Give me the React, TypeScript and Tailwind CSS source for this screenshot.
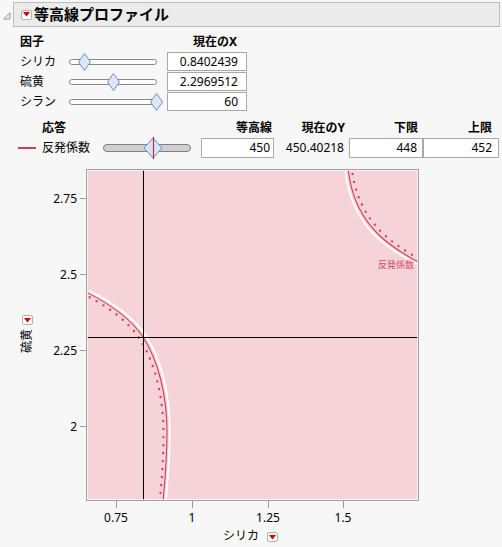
import React from "react";

const MenuButton = () => (
  <span className="inline-flex w-[11px] h-[10px] shrink-0 items-center justify-center rounded-[2px] border border-[#b3b3b3] bg-white">
    <svg width="7" height="5" viewBox="0 0 7 5">
      <path d="M0 0H7L3.5 4.5Z" fill="#d40000" />
    </svg>
  </span>
);

const FactorSlider = ({ pos }: { pos: number }) => (
  <div className="relative flex h-[19px] w-[88px] items-center">
    <div className="h-[6px] w-full rounded-full border border-[#8a8a8a] bg-white" />
    <svg
      className="absolute top-[1px]"
      style={{ left: pos - 6.5 }}
      width="13"
      height="18"
      viewBox="0 0 13 18"
    >
      <path d="M6.5 0.5L12.5 9L6.5 17.5L0.5 9Z" fill="#dce8f7" stroke="#6c90c6" />
    </svg>
  </div>
);

const factors = [
  { name: "シリカ", value: "0.8402439", pos: 15 },
  { name: "硫黄", value: "2.2969512", pos: 44 },
  { name: "シラン", value: "60", pos: 87 },
];

const Box = ({ children, w, pr }: { children: React.ReactNode; w: string; pr: string }) => (
  <div className={`flex h-[20px] items-center justify-end border border-[#a9a9a9] bg-white ${w} ${pr}`}>
    {children}
  </div>
);

export default function App() {
  const yTicks = [
    { label: "2.75", y: 198 },
    { label: "2.5", y: 274 },
    { label: "2.25", y: 350 },
    { label: "2", y: 426 },
  ];
  const xTicks = [
    { label: "0.75", x: 116 },
    { label: "1", x: 192 },
    { label: "1.25", x: 268 },
    { label: "1.5", x: 343 },
  ];
  const leftCurve =
    "M86,292 C110,304 131,319 143,337 C158,360 167,395 167,432 C167,460 165,480 163,502";
  const rightCurve =
    "M348,168 C351,198 363,220 380,236 C393,248 405,255 420,263";

  return (
    <div className="h-[547px] w-[502px] overflow-hidden bg-[#f7f7f7] font-['Noto_Sans','Noto_Sans_CJK_JP',sans-serif] text-[12px] leading-none text-black">
      {/* header */}
      <div className="flex h-[29px] items-center pl-[3px]">
        <svg width="8" height="8" viewBox="0 0 8 8" className="mt-[3px]">
          <path d="M7 0.8L7 7L0.8 7Z" fill="#eeeeee" stroke="#8c8c8c" strokeWidth="0.9" />
        </svg>
        <div className="ml-[2px] flex h-[25px] w-[487px] items-center gap-[2px] border border-[#bdbdbd] bg-[#ebebeb] pl-[7px]">
          <MenuButton />
          <span className="text-[15px] font-bold">等高線プロファイル</span>
        </div>
      </div>

      {/* factors */}
      <div className="mt-[5px] pl-[20px]">
        <div className="flex h-[16px] items-center font-bold">
          <span className="w-[147px]">因子</span>
          <span className="w-[70px] text-right">現在のX</span>
        </div>
        <div className="mt-[2px] flex flex-col gap-[1px]">
          {factors.map((f) => (
            <div key={f.name} className="flex h-[19px] items-center">
              <span className="w-[49px]">{f.name}</span>
              <FactorSlider pos={f.pos} />
              <div className="ml-[10px] flex h-[19px] w-[80px] items-center justify-end border border-[#a9a9a9] bg-white pr-[8px]">
                {f.value}
              </div>
            </div>
          ))}
        </div>
      </div>

      {/* responses */}
      <div className="mt-[9px] flex h-[16px] items-center font-bold">
        <span className="w-[103px] pl-[42px]">応答</span>
        <span className="w-[98px]" />
        <span className="w-[73px] pr-[2px] text-right">等高線</span>
        <span className="w-[75px] pr-[4px] text-right">現在のY</span>
        <span className="w-[74px] pr-[5px] text-right">下限</span>
        <span className="w-[75px] pr-[6px] text-right">上限</span>
      </div>
      <div className="mt-[2px] flex h-[20px] items-center">
        <div className="flex w-[103px] items-center">
          <span className="ml-[18px] h-[2px] w-[18px] bg-[#d23c55]" />
          <span className="ml-[6px]">反発係数</span>
        </div>
        <div className="relative flex h-[20px] w-[88px] items-center">
          <div className="h-[8px] w-full rounded-full border border-[#7f7f7f] bg-[#d0d0d0]" />
          <svg className="absolute left-[40px] top-[-1px]" width="20" height="22" viewBox="0 0 20 22">
            <path d="M10 1L19 11L10 21L1 11Z" fill="#d6e4f5" stroke="#6c90c6" />
            <path d="M10.5 0V22" stroke="#c8283f" strokeWidth="1.2" />
          </svg>
        </div>
        <div className="w-[10px]" />
        <Box w="w-[73px]" pr="pr-[3px]">450</Box>
        <span className="w-[75px] pr-[5px] text-right">450.40218</span>
        <Box w="w-[74px]" pr="pr-[5px]">448</Box>
        <Box w="w-[76px]" pr="pr-[6px]">452</Box>
      </div>

      {/* plot */}
      <div className="mt-[2px] flex">
        <div className="flex h-[365px] w-[40px] flex-col items-center pt-[155px] pl-[14px]">
          <MenuButton />
          <span className="mt-[4px] rotate-180 [writing-mode:vertical-rl] [text-orientation:sideways]">
            硫黄
          </span>
        </div>
        <svg width="462" height="365" viewBox="40 160 462 365">
          <defs>
            <clipPath id="plotArea">
              <rect x="87" y="170" width="331" height="330" />
            </clipPath>
          </defs>
          <rect x="86.5" y="169.5" width="332" height="331" fill="#f5d3d9" stroke="#a0a0a0" />
          <g clipPath="url(#plotArea)" fill="none">
            <path d={leftCurve} transform="translate(2.8,-1.4)" stroke="#ffffff" strokeWidth="1.9" />
            <path d={leftCurve} stroke="#d23c55" strokeWidth="1.1" />
            <path
              d={leftCurve}
              transform="translate(-3.5,1.5)"
              stroke="#d4455d"
              strokeWidth="2.4"
              strokeDasharray="0 8"
              strokeLinecap="round"
            />
            <path d={rightCurve} transform="translate(-2.8,1.4)" stroke="#ffffff" strokeWidth="1.9" />
            <path d={rightCurve} stroke="#d23c55" strokeWidth="1.1" />
            <path
              d={rightCurve}
              transform="translate(3.5,-2)"
              stroke="#d4455d"
              strokeWidth="2.4"
              strokeDasharray="0 8"
              strokeLinecap="round"
            />
            <text x="378" y="268" fontSize="9" fill="#d4506a">
              反発係数
            </text>
            <path d="M143.5 170V500" stroke="#000" strokeWidth="1" />
            <path d="M87 337.5H418" stroke="#000" strokeWidth="1" />
          </g>
          <rect x="87.5" y="170.5" width="330" height="329" fill="none" stroke="#ffffff" strokeOpacity="0.7" />
          {yTicks.map((t) => (
            <g key={t.label}>
              <path d={`M80 ${t.y + 0.5}H86`} stroke="#9a9a9a" />
              <text x="77" y={t.y + 4.5} fontSize="12" textAnchor="end" fill="#000">
                {t.label}
              </text>
            </g>
          ))}
          {xTicks.map((t) => (
            <g key={t.label}>
              <path d={`M${t.x + 0.5} 501V508`} stroke="#9a9a9a" />
              <text x={t.x} y="522" fontSize="12" textAnchor="middle" fill="#000">
                {t.label}
              </text>
            </g>
          ))}
        </svg>
      </div>
      <div className="flex h-[22px] items-center pl-[223px]">
        <span>シリカ</span>
        <span className="ml-[8px]">
          <MenuButton />
        </span>
      </div>
    </div>
  );
}
